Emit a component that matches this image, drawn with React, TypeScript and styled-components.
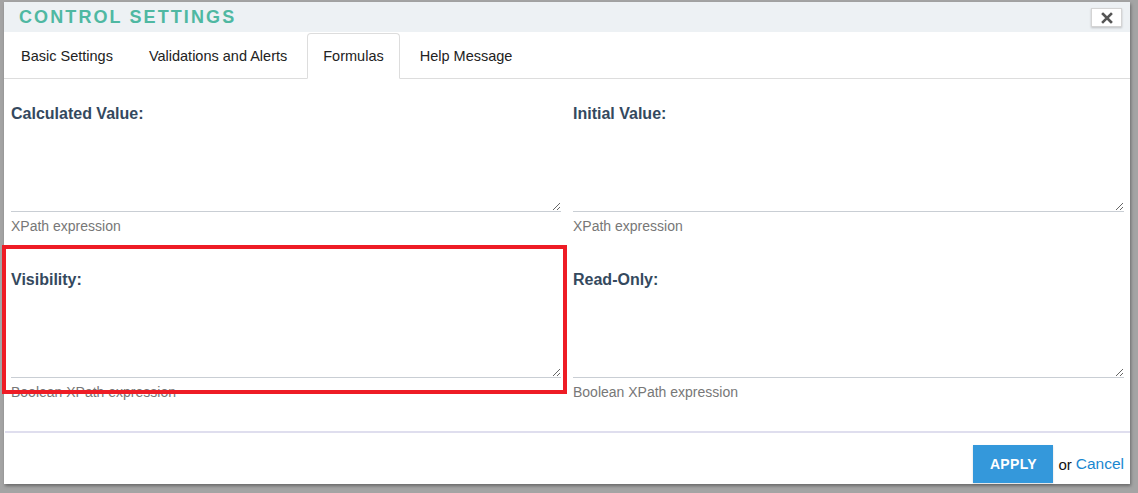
import React from "react";
import styled, { createGlobalStyle } from "styled-components";

const Global = createGlobalStyle`
  html, body { margin: 0; padding: 0; }
  body { font-family: "Liberation Sans", Arial, sans-serif; background: #a4a4a4; }
  * { box-sizing: border-box; }
`;

const Page = styled.div`
  position: relative;
  width: 1138px;
  height: 493px;
  background: #a4a4a4;
  padding: 2px 8px 0 4px;
  overflow: hidden;
`;

const Dialog = styled.div`
  width: 1126px;
  height: 482px;
  background: #fff;
  display: flex;
  flex-direction: column;
  box-shadow: 1px 2px 3px rgba(0, 0, 0, 0.35);
`;

const Header = styled.div`
  height: 30px;
  background: #edf1f4;
  display: flex;
  align-items: center;
  justify-content: space-between;
  padding: 0 8px 0 15px;
`;

const Title = styled.h1`
  margin: 0;
  font-family: "Liberation Sans", Arial, sans-serif;
  font-size: 18px;
  font-weight: 700;
  letter-spacing: 2.1px;
  color: #4fb8a2;
  line-height: 30px;
`;

const CloseButton = styled.button`
  width: 31px;
  height: 19px;
  margin-top: 1px;
  padding: 0;
  background: #fff;
  border: 1px solid #d4d4d4;
  box-shadow: 0 1px 2px rgba(0, 0, 0, 0.2);
  display: flex;
  align-items: center;
  justify-content: center;
`;

const TabBar = styled.div`
  height: 47px;
  padding: 1px 0 0 1px;
  display: flex;
  align-items: stretch;
  gap: 4px;
  border-bottom: 1px solid #dddddd;
`;

const Tab = styled.div<{ $active?: boolean }>`
  padding: 0 15px;
  display: flex;
  align-items: center;
  font-size: 14.5px;
  color: #222;
  margin-bottom: -1px;
  border: 1px solid ${(p) => (p.$active ? "#dddddd" : "transparent")};
  border-bottom: 1px solid ${(p) => (p.$active ? "#fff" : "transparent")};
  border-radius: 4px 4px 0 0;
  background: ${(p) => (p.$active ? "#fff" : "transparent")};
`;

const Content = styled.div`
  padding: 25px 6px 30px 7px;
  display: grid;
  grid-template-columns: 550px 551px;
  column-gap: 12px;
  row-gap: 35px;
`;

const Field = styled.div`
  display: flex;
  flex-direction: column;
`;

const Label = styled.label`
  font-size: 16px;
  font-weight: 700;
  line-height: 20px;
  color: #34495e;
`;

const Area = styled.textarea`
  display: block;
  width: 100%;
  height: 88px;
  border: none;
  border-bottom: 1px solid #c9ced4;
  outline: none;
  font-family: "Liberation Sans", Arial, sans-serif;
  font-size: 14px;
  padding: 4px 0;
  background: #fff;
  resize: vertical;
`;

const Help = styled.div`
  margin-top: 5px;
  font-size: 14px;
  line-height: 18px;
  color: #777;
`;

const Divider = styled.div`
  height: 2px;
  margin-left: 1px;
  background: #dfdeee;
`;

const Footer = styled.div`
  padding: 12px 6px 0 0;
  display: flex;
  justify-content: flex-end;
  align-items: center;
`;

const ApplyButton = styled.button`
  width: 80px;
  height: 38px;
  border: none;
  background: #3498db;
  color: #fff;
  font-family: "Liberation Sans", Arial, sans-serif;
  font-size: 14px;
  font-weight: 700;
  letter-spacing: 0.3px;
  box-shadow: 0 1px 2px rgba(0, 0, 0, 0.15);
`;

const Or = styled.span`
  margin-left: 5px;
  font-size: 15px;
  color: #111;
`;

const CancelLink = styled.a`
  margin-left: 4px;
  font-size: 15.5px;
  color: #1a87d0;
  text-decoration: none;
`;

const Highlight = styled.div`
  position: absolute;
  left: 2px;
  top: 245px;
  width: 565px;
  height: 149px;
  border: 4px solid #ee1c25;
  pointer-events: none;
`;

const fields = [
  { label: "Calculated Value:", help: "XPath expression" },
  { label: "Initial Value:", help: "XPath expression" },
  { label: "Visibility:", help: "Boolean XPath expression" },
  { label: "Read-Only:", help: "Boolean XPath expression" },
];

const tabs = ["Basic Settings", "Validations and Alerts", "Formulas", "Help Message"];

export default function App() {
  return (
    <>
      <Global />
      <Page>
        <Dialog>
          <Header>
            <Title>CONTROL SETTINGS</Title>
            <CloseButton aria-label="Close">
              <svg width="12" height="12" viewBox="0 0 12 12">
                <path d="M2 2 L10 10 M10 2 L2 10" stroke="#555" strokeWidth="2.6" strokeLinecap="square" />
              </svg>
            </CloseButton>
          </Header>
          <TabBar>
            {tabs.map((t) => (
              <Tab key={t} $active={t === "Formulas"}>
                {t}
              </Tab>
            ))}
          </TabBar>
          <Content>
            {fields.map((f) => (
              <Field key={f.label}>
                <Label>{f.label}</Label>
                <Area />
                <Help>{f.help}</Help>
              </Field>
            ))}
          </Content>
          <Divider />
          <Footer>
            <ApplyButton>APPLY</ApplyButton>
            <Or>or</Or>
            <CancelLink href="#">Cancel</CancelLink>
          </Footer>
        </Dialog>
        <Highlight />
      </Page>
    </>
  );
}
